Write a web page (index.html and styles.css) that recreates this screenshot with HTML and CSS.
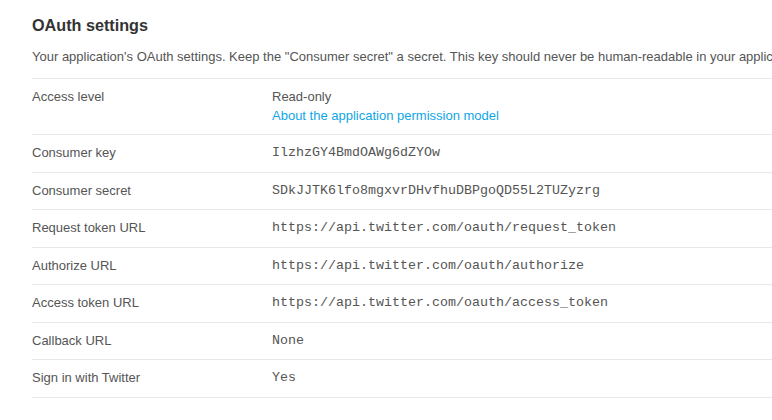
FILE: index.html
```html
<!DOCTYPE html>
<html>
<head>
<meta charset="utf-8">
<title>OAuth settings</title>
<link rel="stylesheet" href="styles.css">
</head>
<body>
<section class="panel">
  <h2 class="panel-title">OAuth settings</h2>
  <p class="panel-intro">Your application's OAuth settings. Keep the "Consumer secret" a secret. This key should never be human-readable in your application.</p>
  <dl class="settings">
    <div class="row">
      <dt class="label">Access level</dt>
      <dd class="value">Read-only<br><a class="link" href="#">About the application permission model</a></dd>
    </div>
    <div class="row">
      <dt class="label">Consumer key</dt>
      <dd class="value mono">IlzhzGY4BmdOAWg6dZYOw</dd>
    </div>
    <div class="row">
      <dt class="label">Consumer secret</dt>
      <dd class="value mono">SDkJJTK6lfo8mgxvrDHvfhuDBPgoQD55L2TUZyzrg</dd>
    </div>
    <div class="row">
      <dt class="label">Request token URL</dt>
      <dd class="value mono">https://api.twitter.com/oauth/request_token</dd>
    </div>
    <div class="row">
      <dt class="label">Authorize URL</dt>
      <dd class="value mono">https://api.twitter.com/oauth/authorize</dd>
    </div>
    <div class="row">
      <dt class="label">Access token URL</dt>
      <dd class="value mono">https://api.twitter.com/oauth/access_token</dd>
    </div>
    <div class="row">
      <dt class="label">Callback URL</dt>
      <dd class="value mono">None</dd>
    </div>
    <div class="row">
      <dt class="label">Sign in with Twitter</dt>
      <dd class="value mono">Yes</dd>
    </div>
  </dl>
</section>
</body>
</html>
```
FILE: styles.css
```css
html, body {
  margin: 0;
  background: #fff;
  overflow: hidden;
}

body {
  font-family: "Liberation Sans", Arial, sans-serif;
  color: #555;
  font-size: 13px;
}

.panel {
  width: 900px;
  padding: 15px 0 0 32px;
}

.panel-title {
  margin: 0;
  font-size: 16.2px;
  line-height: 20px;
  font-weight: bold;
  color: #333;
}

.panel-intro {
  margin: 13px 0 0;
  line-height: 18px;
  white-space: nowrap;
  padding-bottom: 12px;
  border-bottom: 1px solid #e8e8e8;
}

.settings {
  margin: 0;
}

.row {
  display: grid;
  grid-template-columns: 240px 1fr;
  padding: 9px 0;
  line-height: 18.5px;
  border-bottom: 1px solid #e8e8e8;
}

.label,
.value {
  margin: 0;
}

.mono {
  font-family: "Liberation Mono", "Courier New", monospace;
  font-size: 13.33px;
}

.link {
  color: #0ea6e6;
  text-decoration: none;
}
```
